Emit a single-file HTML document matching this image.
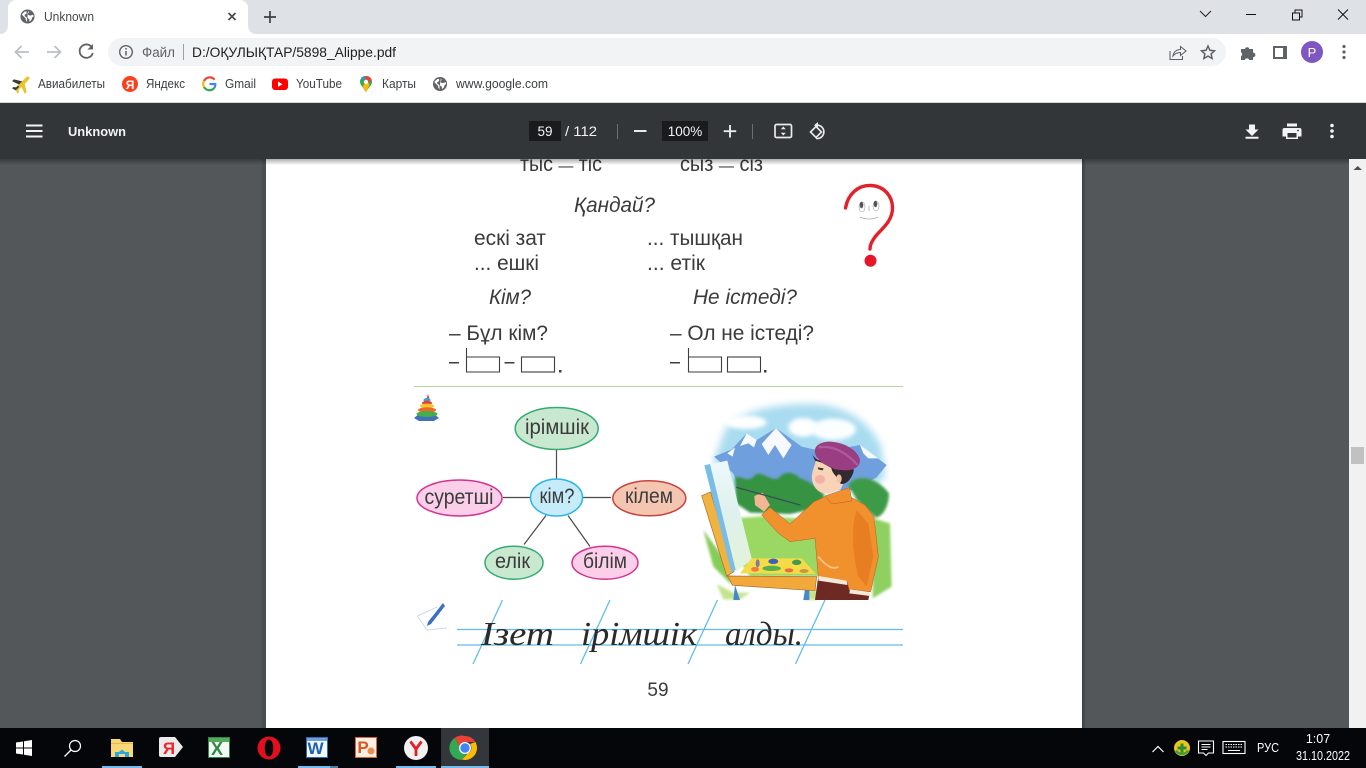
<!DOCTYPE html>
<html lang="kk"><head><meta charset="utf-8"><title>Unknown</title>
<style>
html,body{margin:0;padding:0;width:1366px;height:768px;overflow:hidden;background:#53575a}
svg{display:block;position:absolute;left:0;top:0}
text{font-family:"Liberation Sans","Noto Sans CJK SC",sans-serif;white-space:pre}
.b{font-size:12.5px;fill:#3c4043}
.p{font-size:21px;fill:#3a3a3a}
.i{font-size:21px;fill:#3a3a3a;font-style:italic}
.d{font-size:21px;fill:#3b3b3b;text-anchor:middle}
.h{font-family:"Liberation Serif",serif;font-style:italic;font-size:34px;fill:#2a2a2a}
</style></head><body>
<svg width="1366" height="768" viewBox="0 0 1366 768" xmlns="http://www.w3.org/2000/svg">
<defs>
<symbol id="globe" viewBox="0 0 16 16"><circle cx="8" cy="8" r="7.5" fill="#5f6368"/><path d="M2 6l3 3 1 1v1.5l1.500 2.500V9.500L5 7.500V6l2-1V2.500L5 2.800 2.500 5zM9 2l1 2h-2v2l3 1 3-1 .5 2-1.500 1-1 3-2 1.500V11l-2-1.500V7" fill="#fff"/></symbol>
<filter id="s1" x="-5%" y="-5%" width="110%" height="110%"><feGaussianBlur stdDeviation="0.35"/></filter>
<filter id="sky" filterUnits="userSpaceOnUse" x="0" y="-30" width="660" height="420"><feGaussianBlur stdDeviation="11"/></filter>
<filter id="cl" filterUnits="userSpaceOnUse" x="0" y="0" width="660" height="300"><feGaussianBlur stdDeviation="6"/></filter>
<filter id="gr" filterUnits="userSpaceOnUse" x="0" y="200" width="660" height="445"><feGaussianBlur stdDeviation="4"/></filter>
<filter id="s3" filterUnits="userSpaceOnUse" x="0" y="0" width="660" height="645"><feGaussianBlur stdDeviation="1.100"/></filter>
<linearGradient id="shadow" x1="0" y1="0" x2="0" y2="1"><stop offset="0" stop-color="#000" stop-opacity=".32"/><stop offset="1" stop-color="#000" stop-opacity="0"/></linearGradient>
<linearGradient id="pageL" x1="0" y1="0" x2="1" y2="0"><stop offset="0" stop-color="#3c3f42"/><stop offset="1" stop-color="#53575a"/></linearGradient>
<linearGradient id="canv" x1="0" y1="0" x2="0" y2="1"><stop offset="0" stop-color="#eef8fb"/><stop offset=".45" stop-color="#dff1ee"/><stop offset="1" stop-color="#e3f3d8"/></linearGradient>
</defs>

<!-- PDF viewer background -->
<rect x="0" y="103" width="1349" height="625" fill="#53575a"/>
<rect x="1082" y="159" width="4" height="569" fill="url(#pageL)"/>
<rect x="262" y="159" width="4" height="569" fill="#4a4e51"/>
<rect x="266" y="159" width="816" height="569" fill="#fff"/>

<!-- Scrollbar -->
<rect x="1349" y="103" width="17" height="625" fill="#f1f1f1"/>
<path d="M1353.500 170h8.500l-4.250-4z" fill="#505050"/>
<rect x="1351" y="447" width="13" height="17" fill="#c1c1c1"/>

<!-- PDF page content -->
<g filter="url(#s1)">
<text class="p" x="520" y="171" textLength="82" lengthAdjust="spacingAndGlyphs">тыс <tspan style="font-size:16px">—</tspan> тіс</text>
<text class="p" x="680" y="171" textLength="83" lengthAdjust="spacingAndGlyphs">сыз <tspan style="font-size:16px">—</tspan> сіз</text>
<text class="i" x="574" y="212" textLength="81" lengthAdjust="spacingAndGlyphs">Қандай?</text>
<text class="p" x="474" y="245" textLength="72" lengthAdjust="spacingAndGlyphs">ескі зат</text>
<text class="p" x="647" y="245" textLength="96" lengthAdjust="spacingAndGlyphs">... тышқан</text>
<text class="p" x="474" y="270" textLength="65" lengthAdjust="spacingAndGlyphs">... ешкі</text>
<text class="p" x="647" y="270" textLength="58" lengthAdjust="spacingAndGlyphs">... етік</text>
<text class="i" x="489" y="304" textLength="42" lengthAdjust="spacingAndGlyphs">Кім?</text>
<text class="i" x="693" y="304" textLength="104" lengthAdjust="spacingAndGlyphs">Не істеді?</text>
<text class="p" x="449" y="340" textLength="99" lengthAdjust="spacingAndGlyphs">– Бұл кім?</text>
<text class="p" x="670" y="340" textLength="144" lengthAdjust="spacingAndGlyphs">– Ол не істеді?</text>

<g fill="none" stroke="#3d3d3d" stroke-width="1.100">
<path d="M466.500 348v24h33v-15h-33"/><rect x="521.500" y="357" width="33" height="15"/>
<path d="M688.500 348v24h33v-15h-33"/><rect x="727.500" y="357" width="33" height="15"/>
</g>
<g fill="#3d3d3d"><rect x="449" y="362" width="10" height="1.500"/><rect x="504.500" y="362" width="10" height="1.500"/><rect x="670" y="362" width="10" height="1.500"/><rect x="559" y="370" width="2.500" height="2.500"/><rect x="764" y="370" width="2.500" height="2.500"/></g>
<rect x="414" y="386" width="489" height="1" fill="#b5d99a"/>

<!-- question mark -->
<path d="M845.500 208C848 194 858 185 871 185.500C884 186 892.500 196 892.500 208C892.500 222 881 229 875 237C871.500 242 870 245 870 249" fill="none" stroke="#e2212c" stroke-width="3.400" stroke-linecap="round"/>
<circle cx="870.500" cy="260.700" r="6" fill="#e5142b"/>
<ellipse cx="862" cy="207" rx="3" ry="5" fill="#fff" stroke="#888" stroke-width=".5"/><ellipse cx="876" cy="206" rx="3" ry="5" fill="#fff" stroke="#888" stroke-width=".5"/>
<ellipse cx="861.500" cy="205" rx="1.800" ry="3.200" fill="#555"/><ellipse cx="875.500" cy="204" rx="1.800" ry="3.200" fill="#555"/>
<path d="M869 206v5M860 217q9 4 18 0" fill="none" stroke="#aaa" stroke-width=".8"/>

<!-- pyramid toy -->
<path d="M414 418l5-4h15l5 4-5 3h-15z" fill="#3f72b8"/>
<path d="M428 394l-1.500 5h3z" fill="#d23b4a"/>
<ellipse cx="427" cy="400" rx="3.500" ry="2" fill="#3aa1d8"/><ellipse cx="427" cy="403" rx="5" ry="2.200" fill="#e93b35"/><ellipse cx="427" cy="406" rx="7" ry="2.400" fill="#f7c62f"/><ellipse cx="427" cy="410" rx="9" ry="2.700" fill="#ef6a28"/><ellipse cx="427" cy="414" rx="10.500" ry="3" fill="#46ae4b"/>

<!-- mind map -->
<g stroke="#4a4a4a" stroke-width="1.200"><path d="M556.500 450v29M503 497.500h27M583 497.500h28M546 515.500l-22 29M568 515.500l22 31"/></g>
<g stroke-width="1.500">
<ellipse cx="556.700" cy="428.500" rx="41.500" ry="21" fill="#c8e8cf" stroke="#36ac72"/>
<ellipse cx="459.500" cy="498" rx="42.500" ry="18" fill="#fbcfe9" stroke="#d6338f"/>
<ellipse cx="556.500" cy="497.500" rx="26" ry="18.500" fill="#c6ebf9" stroke="#2bb5e6"/>
<ellipse cx="649.300" cy="498.300" rx="36.500" ry="17.500" fill="#f4c6b2" stroke="#c9423a"/>
<ellipse cx="514" cy="562.700" rx="29" ry="16.500" fill="#c8e8cf" stroke="#36ac72"/>
<ellipse cx="605" cy="562.700" rx="33" ry="16.500" fill="#fbcfe9" stroke="#d6338f"/>
</g>
<text class="d" x="557" y="434" textLength="64" lengthAdjust="spacingAndGlyphs">ірімшік</text>
<text class="d" x="459" y="504" textLength="69" lengthAdjust="spacingAndGlyphs">суретші</text>
<text class="d" x="557" y="503" textLength="35" lengthAdjust="spacingAndGlyphs">кім?</text>
<text class="d" x="649" y="503" textLength="48" lengthAdjust="spacingAndGlyphs">кілем</text>
<text class="d" x="512.500" y="568" textLength="35" lengthAdjust="spacingAndGlyphs">елік</text>
<text class="d" x="605" y="568" textLength="44" lengthAdjust="spacingAndGlyphs">білім</text>

<!-- painter illustration -->
<g transform="translate(690 390) scale(.33333)">
<path d="M110 110C170 55 270 40 370 42C470 45 545 100 575 175L585 260L540 300H130L70 215Z" fill="#a9dcf0" filter="url(#sky)"/>
<g filter="url(#cl)"><ellipse cx="168" cy="97" rx="62" ry="20" fill="#fff"/><ellipse cx="340" cy="112" rx="45" ry="28" fill="#fff"/><ellipse cx="430" cy="118" rx="68" ry="32" fill="#fbfeff"/></g>
<g filter="url(#s3)">
<path d="M72 200L125 178L170 130L200 150L258 114L335 170L400 185L510 165L590 225L560 262L490 300H150L130 250Z" fill="#6f9fdd"/>
<path d="M150 168L170 130L200 150L192 172L175 160ZM215 162L258 114L305 165L280 205L255 165L235 195ZM112 190L135 172L128 200ZM510 165L565 205L535 205L520 190Z" fill="#f6fafe"/>
</g>
<g filter="url(#gr)">
<path d="M130 385L230 378L320 385L380 440L390 560H180L130 480Z" fill="#9ad763"/>
<path d="M40 420L105 510L125 585L70 530Z" fill="#86cc58"/>
<path d="M550 385L600 400L605 590L548 625Z" fill="#8fd060"/>
<path d="M80 582L130 608H180L150 628H100ZM350 600H400L380 630H340Z" fill="#c3e48f"/>
<path d="M135 265C150 250 172 285 195 255C215 240 240 275 265 265C285 240 310 245 330 265C355 272 385 290 405 318L380 355L300 372L180 368L138 340Z" fill="#369343"/>
<path d="M475 285C500 250 560 260 597 310C597 350 575 385 555 382L500 330Z" fill="#3d9b47"/>
</g>
<g filter="url(#s3)">
<!-- easel -->
<path d="M135 585L150 630H130ZM345 598H358L358 630H340Z" fill="#4a88c8"/>
<path d="M35 317L62 306L132 545L110 558Z" fill="#f1b33f" stroke="#a8692c" stroke-width="2"/>
<path d="M43 226L112 212L186 510L137 545Z" fill="url(#canv)"/>
<path d="M43 226L60 222L137 540L124 546Z" fill="#79bde6"/>
<path d="M150 550L185 505H335L378 552Z" fill="#f6db4a"/>
<ellipse cx="195" cy="538" rx="12" ry="7" fill="#ee7d3c"/><ellipse cx="250" cy="514" rx="15" ry="8" fill="#3a64b5"/><ellipse cx="245" cy="535" rx="28" ry="8" fill="#57b04a"/><ellipse cx="320" cy="517" rx="14" ry="8" fill="#3f9a50"/><ellipse cx="297" cy="541" rx="13" ry="6" fill="#e96e3a"/><ellipse cx="342" cy="543" rx="14" ry="6" fill="#c49a4a"/><ellipse cx="203" cy="520" rx="6" ry="12" fill="#7a7ba0"/>
<path d="M112 558L380 560L375 602L128 586Z" fill="#f2a93a" stroke="#a8692c" stroke-width="2"/>
<!-- boy -->
<path d="M385 558L470 572L478 600L540 604L535 630L375 630Z" fill="#6d2a22"/>
<path d="M215 375L240 352L300 402L372 335L410 318L480 320L525 345L552 380L565 500L542 605L478 598L470 572L385 562L375 445L300 455L265 430Z" fill="#f0912f" stroke="#b65b28" stroke-width="1.500"/>
<path d="M500 360C480 420 490 500 505 560L530 590L550 500L535 400Z" fill="#e77f24"/>
<path d="M385 500C410 530 430 540 445 530" stroke="#fbc68a" stroke-width="5" fill="none"/>
<path d="M405 318L478 293L486 333L425 342Z" fill="#f28f2d" stroke="#b65b28" stroke-width="1.500"/>
<path d="M385 558L470 572L472 585L385 572ZM480 598L540 606V618L478 610Z" fill="#f4e8d8"/>
<path d="M193 318L218 308L240 345L222 365L195 345Z" fill="#f2b792"/>
<path d="M140 292L330 345" stroke="#3b4d58" stroke-width="4" stroke-linecap="round"/>
<path d="M380 205C372 235 362 250 367 275C374 300 392 312 415 310L452 298L468 262L440 215Z" fill="#f7d3b8"/>
<ellipse cx="390" cy="268" rx="15" ry="13" fill="#f2a7a0" opacity=".75"/>
<path d="M365 190C372 205 385 210 395 213L422 226C428 240 440 236 455 240L492 238C488 262 472 284 452 282C448 262 428 256 424 234L395 218L375 212Z" fill="#30292d"/>
<ellipse cx="447" cy="266" rx="8" ry="13" fill="#f4c3a4"/>
<path d="M383 232l18 3-3 6-13-3z" fill="#3a3030"/>
<ellipse cx="442" cy="198" rx="70" ry="39" transform="rotate(18 442 198)" fill="#9b3c83"/>
<path d="M385 172Q445 162 503 225" fill="none" stroke="#b867a4" stroke-width="7" opacity=".7"/>
</g>
</g>

<!-- writing lines -->
<g stroke="#62bde8" stroke-width="1.300" fill="none">
<path d="M457 629.500H903M457 645H903"/>
<path d="M502.500 600L473 664M610 600L580.500 664M717.500 600L688 664M825 600L795.500 664"/>
</g>
<text class="h" x="481" y="645" textLength="73" lengthAdjust="spacingAndGlyphs">Ізет</text>
<text class="h" x="581" y="645" textLength="116" lengthAdjust="spacingAndGlyphs">ірімшік</text>
<text class="h" x="725" y="645" textLength="78" lengthAdjust="spacingAndGlyphs">алды.</text>
<!-- pen -->
<path d="M417.500 616L437 607M417.500 616L427 630L447 628" fill="none" stroke="#c8dde6" stroke-width="1"/>
<path d="M443 603L428 622l-1 4 4-2L445 606Z" fill="#3d6fc0"/>
<text x="658" y="696" text-anchor="middle" style="font-size:19px;fill:#3a3a3a">59</text>
</g>

<!-- toolbar shadow -->
<rect x="0" y="159" width="1349" height="6" fill="url(#shadow)"/>

<!-- Tab strip -->
<rect x="0" y="0" width="1366" height="34" fill="#dee1e6"/>
<path d="M0 34a8 8 0 0 0 8-8V8a8 8 0 0 1 8-8H240a8 8 0 0 1 8 8V26a8 8 0 0 0 8 8Z" fill="#fff"/>
<use href="#globe" x="20" y="9" width="15" height="15"/>
<text x="44" y="21" style="font-size:12.5px;fill:#45494d" textLength="50" lengthAdjust="spacingAndGlyphs">Unknown</text>
<path d="M228.500 13l7 7m0-7l-7 7" stroke="#45494d" stroke-width="1.700"/>
<path d="M270 11v12M264 17h12" stroke="#3c4043" stroke-width="1.700"/>
<path d="M1200 11l5.500 5.500L1211 11" fill="none" stroke="#222" stroke-width="1"/>
<path d="M1246 14.500h10" stroke="#111" stroke-width="1"/>
<path d="M1292.500 13h7v7h-7zM1295 13v-3h7v7h-2.500" fill="none" stroke="#111" stroke-width="1"/>
<path d="M1338 9.500l10 10m0-10l-10 10" stroke="#111" stroke-width="1"/>

<!-- Address toolbar -->
<rect x="0" y="34" width="1366" height="68" fill="#fff"/>
<path d="M29 52H16M21.500 46l-6 6 6 6" fill="none" stroke="#bdc0c4" stroke-width="1.800"/>
<path d="M47 52H60M54.500 46l6 6-6 6" fill="none" stroke="#bdc0c4" stroke-width="1.800"/>
<path d="M92 47.500A6.700 6.700 0 1 0 92.800 53" fill="none" stroke="#5f6368" stroke-width="1.800"/><path d="M93 44v5.500h-5.500z" fill="#5f6368"/>
<rect x="108" y="38" width="1118" height="28" rx="14" fill="#f1f3f4"/>
<circle cx="126" cy="52" r="6.300" fill="none" stroke="#5f6368" stroke-width="1.400"/><path d="M126 51v4.500M126 48v1.600" stroke="#5f6368" stroke-width="1.500"/>
<text x="142" y="57" style="font-size:13.5px;fill:#5f6368" textLength="33" lengthAdjust="spacingAndGlyphs">Файл</text>
<rect x="183" y="44" width="1" height="16" fill="#9aa0a6"/>
<text x="192" y="57" style="font-size:14px;fill:#202124" textLength="204" lengthAdjust="spacingAndGlyphs">D:/ОҚУЛЫҚТАР/5898_Alippe.pdf</text>
<path d="M1170 51v8.500h12.500V56" fill="none" stroke="#5f6368" stroke-width="1.100"/><path d="M1173 56c.5-4 3.500-6.500 7.500-6.500V46.500l5.500 4.500-5.500 4.500v-3c-3 0-5.500 1-7.500 3.500z" fill="none" stroke="#5f6368" stroke-width="1.100"/>
<path d="M1208 46l1.900 4.300 4.600.5-3.400 3.100 1 4.600-4.100-2.400-4.100 2.400 1-4.600-3.400-3.100 4.600-.5z" fill="none" stroke="#5f6368" stroke-width="1.500"/>
<path d="M1241 49h4a2.200 2.200 0 0 1 4.300 0h3.700v3.500a2.400 2.400 0 0 1 0 4.800v2.700h-3.800a2.300 2.300 0 0 0-4.400 0H1241v-3.700a2.300 2.300 0 0 0 0-4z" fill="#5f6368"/>
<path d="M1273 46h14v13h-14z" fill="#5f6368"/><rect x="1275" y="48" width="8" height="9" fill="#fff"/>
<circle cx="1312" cy="52" r="11" fill="#7e57c2"/><text x="1312" y="57" text-anchor="middle" style="font-size:13px;fill:#fff">P</text>
<g fill="#5f6368"><circle cx="1344" cy="46.500" r="1.600"/><circle cx="1344" cy="52" r="1.600"/><circle cx="1344" cy="57.500" r="1.600"/></g>

<!-- Bookmarks -->
<g transform="translate(22 84) rotate(45)">
<path d="M0-10C1.200-10 1.800-8.500 1.800-7V-2L9 2.500V5L1.800 2.500V6.500L4 8.500V10L0 9-4 10V8.500L-1.800 6.500V2.500L-9 5V2.500L-1.800-2V-7C-1.800-8.500-1.200-10 0-10Z" fill="#e9c32b"/>
<path d="M-1.800-2L-9 2.500V5L-1.800 2.500Z M-1.800 6.500L-4 8.500V10L0 9V4H-1.800Z" fill="#3a3a3a"/>
</g>
<text class="b" x="38" y="88" textLength="67" lengthAdjust="spacingAndGlyphs">Авиабилеты</text>
<circle cx="130" cy="84" r="8" fill="#fc3f1d"/><text x="130" y="89" text-anchor="middle" style="font-size:12px;fill:#fff;font-weight:bold">Я</text>
<text class="b" x="146" y="88" textLength="39" lengthAdjust="spacingAndGlyphs">Яндекс</text>
<g fill="none" stroke-width="2.200"><path d="M214.500 79.600A6.300 6.300 0 0 0 204 81" stroke="#ea4335"/><path d="M204 81a6.300 6.300 0 0 0 0 6" stroke="#fbbc05"/><path d="M204 87a6.300 6.300 0 0 0 10 1.300" stroke="#34a853"/><path d="M214 88.300A6 6 0 0 0 215.300 84H209.500" stroke="#4285f4"/></g>
<text class="b" x="225" y="88" textLength="31" lengthAdjust="spacingAndGlyphs">Gmail</text>
<rect x="272" y="78.500" width="16" height="11.500" rx="3" fill="#f00"/><path d="M278 81.500l4.500 2.700-4.500 2.700z" fill="#fff"/>
<text class="b" x="296" y="88" textLength="46" lengthAdjust="spacingAndGlyphs">YouTube</text>
<path d="M366 76c3.800 0 6 2.800 6 5.700 0 3.800-4 6-6 10.800-2-4.800-6-7-6-10.800C360 78.800 362.200 76 366 76z" fill="#34a853"/><path d="M361 78c1-1.300 3-2 5-2l-2 3.500z" fill="#4285f4"/><path d="M366 76c3 0 5 1.500 5.700 4L367 84l-2-4z" fill="#ea4335"/><path d="M362.500 86l5-5 2 4-3.500 7.500c-.7-2.500-2.300-4.300-3.500-6.500z" fill="#fbbc05"/><circle cx="366" cy="82" r="2.200" fill="#fff"/>
<text class="b" x="382" y="88" textLength="34" lengthAdjust="spacingAndGlyphs">Карты</text>
<use href="#globe" x="432.500" y="76.500" width="15" height="15"/>
<text class="b" x="456" y="88" textLength="92" lengthAdjust="spacingAndGlyphs">www.google.com</text>
<rect x="0" y="102" width="1366" height="1" fill="#d5d6d8"/>

<!-- PDF toolbar -->
<rect x="0" y="103" width="1366" height="56" fill="#323639"/>
<path d="M26 125.500h16.500M26 131h16.500M26 136.500h16.500" stroke="#f1f3f4" stroke-width="2"/>
<text x="68" y="136" style="font-size:13px;font-weight:bold;fill:#f1f3f4" textLength="58" lengthAdjust="spacingAndGlyphs">Unknown</text>
<rect x="529" y="121" width="32" height="20" fill="#191b1c"/>
<text x="545" y="136" text-anchor="middle" style="font-size:13.5px;fill:#f1f3f4">59</text>
<text x="565" y="136" style="font-size:13.5px;fill:#f1f3f4" textLength="32" lengthAdjust="spacingAndGlyphs">/ 112</text>
<rect x="617" y="124" width="1" height="15" fill="#6b6f72"/>
<rect x="634" y="130" width="12.500" height="2" fill="#e8eaed"/>
<rect x="662" y="121" width="46" height="20" fill="#191b1c"/>
<text x="685" y="136" text-anchor="middle" style="font-size:13.5px;fill:#f1f3f4">100%</text>
<path d="M730 125v12.500M723.700 131.200h12.500" stroke="#e8eaed" stroke-width="1.900"/>
<rect x="752" y="124" width="1" height="15" fill="#6b6f72"/>
<rect x="775" y="124.500" width="16.500" height="13" rx="1.500" fill="none" stroke="#e8eaed" stroke-width="1.700"/><path d="M783.300 126.500l-2.500 2.700h5zM783.300 135.500l-2.500-2.700h5z" fill="#e8eaed"/>
<path d="M810.500 132l5.500-5.500 5.500 5.500-5.500 5.500z" fill="none" stroke="#e8eaed" stroke-width="1.600"/><path d="M817 125.200h1a6.700 6.700 0 0 1 0 13.300h-2" fill="none" stroke="#e8eaed" stroke-width="1.600"/><path d="M818 122v6.500l-4-3.200z" fill="#e8eaed"/>
<path d="M1249 124.500h6v5h3.500l-6.500 6.500-6.500-6.500h3.500zM1245.500 136.800h13v1.900h-13z" fill="#f1f3f4"/>
<path d="M1287 123.500h10v3h-10zM1284.500 128h15a2 2 0 0 1 2 2v6.500h-3.500v2.500h-12v-2.500h-3.500V130a2 2 0 0 1 2-2z" fill="#f1f3f4"/><rect x="1287.500" y="133" width="9" height="4.500" fill="#323639"/><circle cx="1298" cy="130.500" r=".9" fill="#323639"/>
<g fill="#f1f3f4"><circle cx="1332" cy="125.500" r="1.800"/><circle cx="1332" cy="131" r="1.800"/><circle cx="1332" cy="136.500" r="1.800"/></g>

<!-- Taskbar -->
<rect x="0" y="728" width="1366" height="40" fill="#05060a"/>
<path d="M16 742.500l7-1v6h-7zM24 741.300l8-1.300v7.500h-8zM16 748.500h7v6l-7-1zM24 748.500h8v7.500l-8-1.300z" fill="#fff"/>
<circle cx="75" cy="746" r="5.500" fill="none" stroke="#fff" stroke-width="1.200"/><path d="M71 750l-6.500 6.500" stroke="#fff" stroke-width="1.300"/>
<!-- folder -->
<path d="M111 739h9l2 3h11v15h-22z" fill="#f9d876"/><rect x="111" y="743" width="22" height="1" fill="#e6b94d"/><path d="M115 757v-5h4l3-2.500 3 2.500h4v5h-4v-3h-6v3z" fill="#29a7e1"/>
<!-- yandex -->
<path d="M161 737h14l8 10-8 10h-14a2 2 0 0 1-2-2v-16a2 2 0 0 1 2-2z" fill="#eceaea"/><text x="169" y="754" text-anchor="middle" style="font-size:17px;font-weight:bold;fill:#e8262b">Я</text>
<!-- excel -->
<rect x="208.500" y="737.500" width="21" height="20" fill="#f5f9f5" stroke="#2e8b45"/><rect x="209" y="738" width="20" height="4" fill="#57a95e"/><text x="217" y="755" text-anchor="middle" style="font-size:18px;font-weight:bold;fill:#2e8b45">X</text>
<!-- opera -->
<ellipse cx="269" cy="748" rx="11.500" ry="11.500" fill="#e2101d"/><ellipse cx="269" cy="748" rx="4.300" ry="8.500" fill="#05060a"/>
<!-- word -->
<rect x="306.500" y="737.500" width="21" height="20" fill="#f5f8fc" stroke="#2a6cb8"/><rect x="307" y="738" width="20" height="3" fill="#6ea0dc"/><text x="315.500" y="754" text-anchor="middle" style="font-size:17px;font-weight:bold;fill:#1f5fb4">W</text>
<!-- ppt -->
<rect x="355.500" y="737.500" width="21" height="20" fill="#fbeee4" stroke="#d9642b"/><text x="363" y="753" text-anchor="middle" style="font-size:17px;font-weight:bold;fill:#d9581f">P</text><circle cx="371" cy="751" r="3.500" fill="#ee8b4e"/>
<!-- yandex browser -->
<circle cx="416" cy="748" r="12" fill="#f1f1f1"/><path d="M410.500 741.500l5.500 7.500 5.500-7.500M416 749v7" fill="none" stroke="#e21d24" stroke-width="2.800"/>
<!-- chrome -->
<rect x="441" y="728" width="48" height="40" fill="#33363a"/>
<path d="M465 736a12 12 0 0 1 10.400 6H465a6 6 0 0 0-5.700 4.100l-4.700-8.100A12 12 0 0 1 465 736z" fill="#ea4335"/>
<path d="M454.600 738l5.200 9a6 6 0 0 0 6.500 6.900l-4.400 6A12 12 0 0 1 454.600 738z" fill="#34a853"/>
<path d="M475.400 742A12 12 0 0 1 462 759.600l5.300-6a6 6 0 0 0 2.700-9.600z" fill="#fbbc05"/>
<circle cx="465" cy="748" r="6" fill="#fff"/><circle cx="465" cy="748" r="4.700" fill="#4285f4"/>
<!-- indicators -->
<g fill="#76b9ed"><rect x="102" y="766" width="40" height="2"/><rect x="298" y="766" width="32" height="2"/><rect x="330" y="766" width="8" height="2" fill="#4f7ea3"/><rect x="396" y="766" width="40" height="2"/><rect x="441" y="766" width="48" height="2"/></g>
<!-- tray -->
<path d="M1152.500 752l5.500-5.500 5.500 5.500" fill="none" stroke="#fff" stroke-width="1.200"/>
<circle cx="1182" cy="748" r="8" fill="#e9c41f"/><path d="M1175 751a8 8 0 0 0 14 0l-2-1a6 6 0 0 1-10 0z" fill="#3ca13d"/><path d="M1180.500 743.500h3v3h3v3h-3v3h-3v-3h-3v-3h3z" fill="#2a8f33"/>
<path d="M1198.500 741h15v12h-5l-2.500 2.500-2.500-2.500h-5z" fill="none" stroke="#fff" stroke-width="1.100"/><path d="M1201.500 744.500h9M1201.500 747h9M1201.500 749.500h6" stroke="#fff" stroke-width="1"/>
<rect x="1223" y="741.500" width="22" height="12" fill="none" stroke="#fff" stroke-width="1.100"/><path d="M1225.500 744.500h17M1225.500 747h17" stroke="#fff" stroke-width="1" stroke-dasharray="1.500 1"/><path d="M1228 750.500h12" stroke="#fff" stroke-width="1"/>
<text x="1257" y="752" style="font-size:12.5px;fill:#fff" textLength="22" lengthAdjust="spacingAndGlyphs">РУС</text>
<text x="1318" y="743" text-anchor="middle" style="font-size:12.500px;fill:#fff">1:07</text>
<text x="1323" y="760" text-anchor="middle" style="font-size:12.500px;fill:#fff" textLength="54" lengthAdjust="spacingAndGlyphs">31.10.2022</text>
</svg>
</body></html>
